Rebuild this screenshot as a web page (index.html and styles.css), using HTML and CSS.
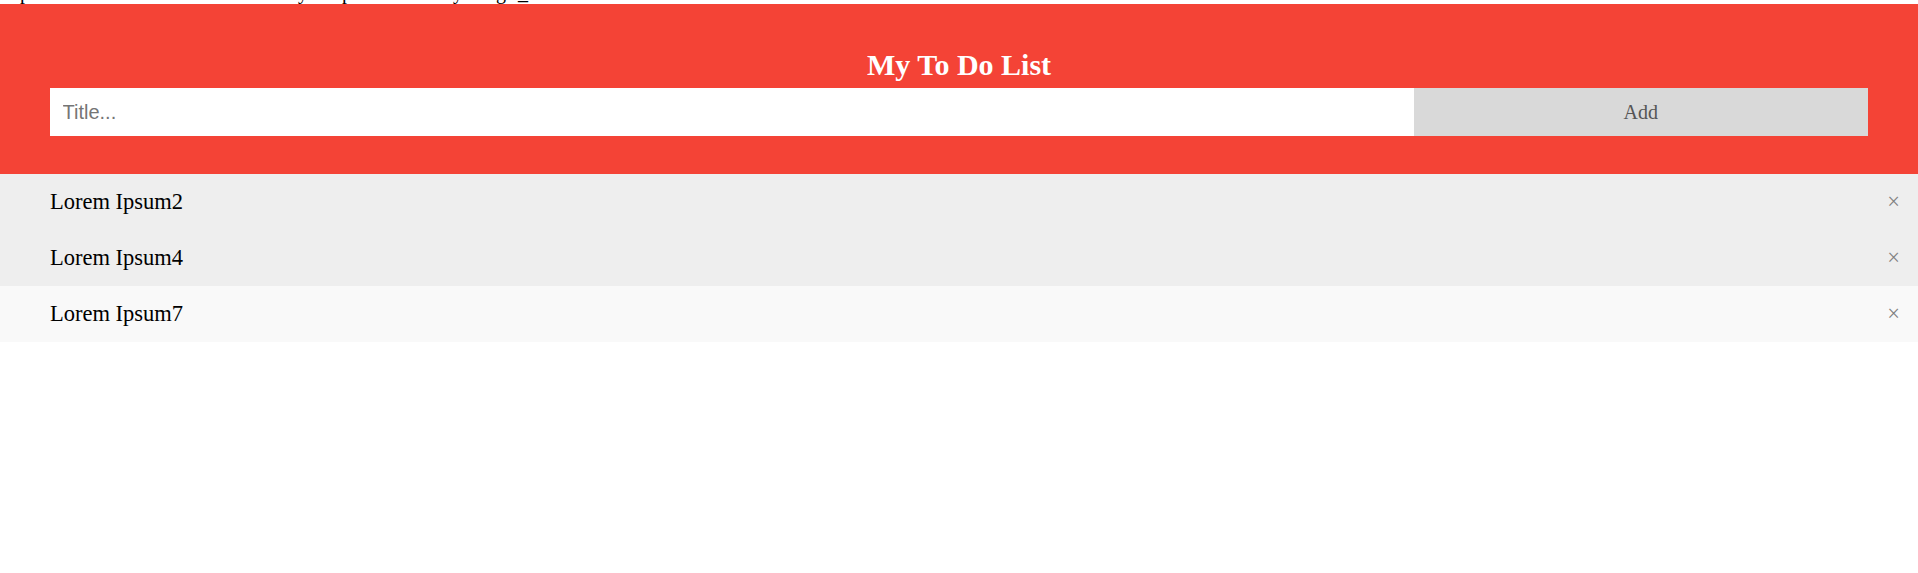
FILE: index.html
```html
<!DOCTYPE html>
<html>
<head>
<meta charset="utf-8">
<link rel="stylesheet" href="styles.css">
</head>
<body>
<div class="topline"><span class="d d1">p</span><span class="d d2">y</span><span class="d d3">p</span><span class="d d4">y</span><span class="d d5">g</span><span class="d d6">_</span></div>
<div class="header">
  <h2 class="title">My To Do List</h2>
  <div class="form">
    <input class="field" type="text" placeholder="Title...">
    <span class="addBtn">Add</span>
  </div>
</div>
<ul class="list">
  <li class="item even">Lorem Ipsum2<span class="close">&times;</span></li>
  <li class="item even">Lorem Ipsum4<span class="close">&times;</span></li>
  <li class="item odd">Lorem Ipsum7<span class="close">&times;</span></li>
</ul>
</body>
</html>
```
FILE: styles.css
```css
* { box-sizing: border-box; }
html, body { margin: 0; padding: 0; background: #fff; }
body { font-family: "Liberation Serif", "Times New Roman", serif; font-size: 20px; color: #000; }

.topline {
  height: 4px;
  overflow: hidden;
  display: flex;
  align-items: flex-end;
}
.d {
  display: block;
  flex: none;
  font-size: 20px;
  line-height: 20px;
  height: 20px;
  margin-bottom: 2px;
}
.d1 { margin-left: 20px; }
.d2 { margin-left: 268px; }
.d3 { margin-left: 34px; }
.d4 { margin-left: 101px; }
.d5 { margin-left: 33px; }
.d6 { margin-left: 12px; }

.header {
  background: #f44336;
  padding: 37.5px 50px;
  color: #fff;
  text-align: center;
}
.title {
  margin: 6.25px;
  font-size: 30px;
  font-weight: bold;
  line-height: normal;
}
.form { display: flex; }
.field {
  width: 75%;
  margin: 0;
  border: none;
  border-radius: 0;
  padding: 12.5px;
  font-family: "Liberation Sans", Arial, sans-serif;
  font-size: 20px;
  height: 48px;
  outline: none;
}
.field::placeholder { color: #757575; }
.addBtn {
  width: 25%;
  padding: 12.5px;
  background: #d9d9d9;
  color: #555;
  text-align: center;
  font-size: 20px;
  height: 48px;
  line-height: 23px;
}

.list { margin: 0; padding: 0; list-style: none; }
.item {
  position: relative;
  padding: 15px 10px 15px 50px;
  font-size: 22.5px;
  height: 56px;
  line-height: 26px;
}
.even { background: #eee; }
.odd { background: #f9f9f9; }
.close {
  position: absolute;
  right: 0;
  top: 0;
  padding: 15px 18px;
  color: #808080;
  line-height: 26px;
}
```
